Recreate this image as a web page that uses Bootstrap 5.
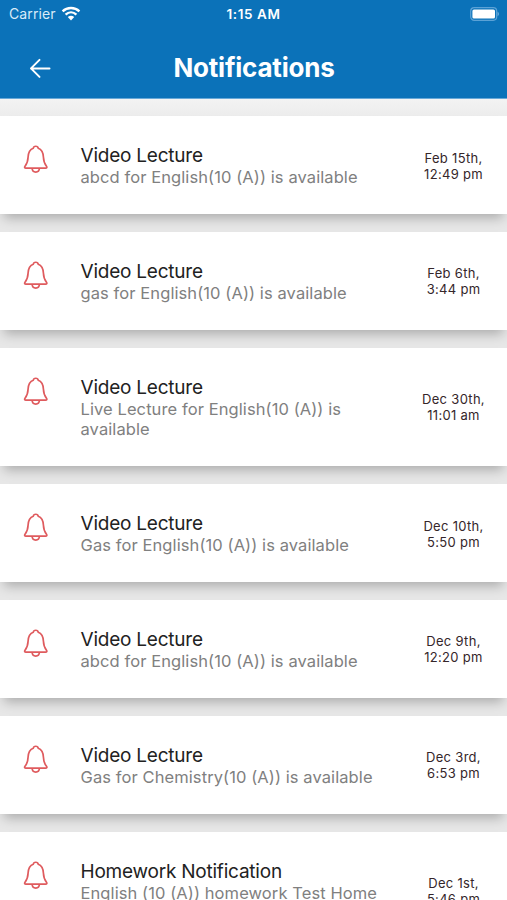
<!DOCTYPE html>
<html lang="en">
<head>
<meta charset="utf-8">
<meta name="viewport" content="width=device-width, initial-scale=1">
<title>Notifications</title>
<link href="https://cdn.jsdelivr.net/npm/bootstrap@5.3.0/dist/css/bootstrap.min.css" rel="stylesheet">
<style>
body{font-family:Inter,"Liberation Sans",sans-serif;background:#f0f0f0;height:900px}
.app-top{background:#0b72b9;height:99px;border-bottom:1px solid #69a9d8}
.status-line{height:28px;font-size:13.5px;padding:0 8px 0 9px;line-height:28px}
.status-line>div{flex:1 1 0}
.carrier{color:#d9ebf8;font-size:14px;letter-spacing:.1px}
.wifi{margin-left:5px}
.clock{letter-spacing:.6px;margin-left:-1px}
.title-line{height:79px;padding-left:29px}
.page-title{font-size:26px;letter-spacing:-.2px;line-height:32px}
.side{width:50px}
.feed{padding-top:17.3px;gap:18px;background:linear-gradient(#f3f3f3,#ececec 18px,#e7e7e7 19px)}
.note{min-height:97.9px;box-shadow:0 8px 11px -4px rgba(0,0,0,.26);padding:28.6px 0 26.4px 23px;background:#fff}
.bell{width:26px;height:30px;margin:-.6px 31.5px 0 0}
.note-title{font-size:19px;line-height:22px;color:#222;letter-spacing:-.22px}
.note-text{font-size:16.5px;line-height:20.6px;color:#808080;letter-spacing:.09px}
.note-copy{width:305px}
.stamp{font-size:13px;line-height:16px;color:#35262a;width:67px;margin-left:34.5px;letter-spacing:.3px}
.stamp-lift{margin-top:-1.6px}
</style>
<script src="https://cdn.jsdelivr.net/npm/bootstrap@5.3.0/dist/js/bootstrap.bundle.min.js"></script>
</head>
<body class="overflow-hidden">
<svg class="d-none">
<symbol id="bell" viewBox="0 0 26 30"><path d="M10.3 4.2C10.6 1.6 14.9 1.6 15.2 4.2C19.2 5.6 20.2 9 20.4 13C20.6 18 21.2 19.5 23.5 22.2C24.3 23.4 23.8 24.2 22.6 24.2H2.9C1.7 24.2 1.2 23.4 2 22.2C4.3 19.5 4.9 18 5.1 13C5.3 9 6.3 5.6 10.3 4.2ZM9.1 24.3C9.3 29.4 16.2 29.4 16.4 24.3" fill="none" stroke="#df5b5e" stroke-width="1.7" stroke-linejoin="round"/></symbol>
</svg>
<header class="app-top text-white">
<div class="status-line d-flex align-items-center">
<div class="carrier d-flex align-items-center"><span>Carrier</span>
<svg class="wifi" width="20" height="16" viewBox="0 0 20 16" fill="none" stroke="#fff" stroke-width="2.4"><path d="M1.6 5.3C6.2.9 13.8.9 18.4 5.3M4.6 8.6C7.8 5.6 12.2 5.6 15.4 8.6"/><path d="M6.8 11C8.8 9.2 11.2 9.2 13.2 11L10 14.4Z" fill="#fff" stroke="none"/></svg></div>
<div class="clock text-center fw-semibold">1:15 AM</div>
<div class="d-flex justify-content-end"><svg width="30" height="14" viewBox="0 0 30 14"><rect x="1.7" y=".7" width="26" height="12.6" rx="3.5" fill="none" stroke="#5ba2d6" stroke-width="1.2"/><rect x="3.4" y="2.4" width="22.6" height="9.2" rx="1.6" fill="#fff"/><path d="M28.6 4.8C30.2 5.5 30.2 8.5 28.6 9.2Z" fill="#78b3df"/></svg></div>
</div>
<div class="title-line d-flex align-items-center justify-content-between">
<svg width="22" height="22" viewBox="0 0 22 22" fill="none" stroke="#fff" stroke-width="2" stroke-linecap="round" stroke-linejoin="round"><path d="M20.5 11.4H2M10.5 2.9L2 11.4L10.5 19.9"/></svg>
<h1 class="page-title fw-bold mb-0">Notifications</h1>
<div class="side"></div>
</div>
</header>
<main class="feed d-flex flex-column">
<article class="note d-flex"><svg class="bell flex-shrink-0"><use href="#bell"/></svg><div class="note-copy flex-shrink-0"><div class="note-title">Video Lecture</div><div class="note-text">abcd for English(10 (A)) is available</div></div><div class="stamp stamp-lift text-center align-self-center">Feb 15th, 12:49 pm</div></article>
<article class="note d-flex"><svg class="bell flex-shrink-0"><use href="#bell"/></svg><div class="note-copy flex-shrink-0"><div class="note-title">Video Lecture</div><div class="note-text">gas for English(10 (A)) is available</div></div><div class="stamp stamp-lift text-center align-self-center">Feb 6th, 3:44 pm</div></article>
<article class="note d-flex"><svg class="bell flex-shrink-0"><use href="#bell"/></svg><div class="note-copy flex-shrink-0"><div class="note-title">Video Lecture</div><div class="note-text">Live Lecture for English(10 (A)) is<br>available</div></div><div class="stamp stamp-lift text-center align-self-center">Dec 30th, 11:01 am</div></article>
<article class="note d-flex"><svg class="bell flex-shrink-0"><use href="#bell"/></svg><div class="note-copy flex-shrink-0"><div class="note-title">Video Lecture</div><div class="note-text">Gas for English(10 (A)) is available</div></div><div class="stamp stamp-lift text-center align-self-center">Dec 10th, 5:50 pm</div></article>
<article class="note d-flex"><svg class="bell flex-shrink-0"><use href="#bell"/></svg><div class="note-copy flex-shrink-0"><div class="note-title">Video Lecture</div><div class="note-text">abcd for English(10 (A)) is available</div></div><div class="stamp stamp-lift text-center align-self-center">Dec 9th, 12:20 pm</div></article>
<article class="note d-flex"><svg class="bell flex-shrink-0"><use href="#bell"/></svg><div class="note-copy flex-shrink-0"><div class="note-title">Video Lecture</div><div class="note-text">Gas for Chemistry(10 (A)) is available</div></div><div class="stamp stamp-lift text-center align-self-center">Dec 3rd,<br>6:53 pm</div></article>
<article class="note d-flex"><svg class="bell flex-shrink-0"><use href="#bell"/></svg><div class="note-copy flex-shrink-0"><div class="note-title">Homework Notification</div><div class="note-text">English (10 (A)) homework Test Home<br>work</div></div><div class="stamp stamp-lift text-center align-self-center">Dec 1st, 5:46 pm</div></article>
</main>
</body>
</html>
